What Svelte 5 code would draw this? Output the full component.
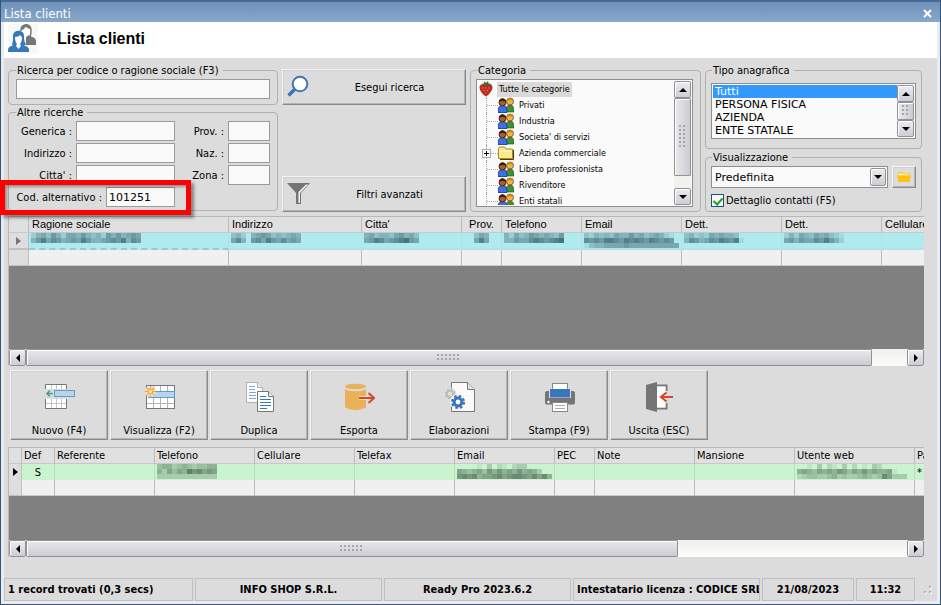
<script>
	let search = $state('');
	let generica = $state('');
	let indirizzo = $state('');
	let citta = $state('');
	let prov = $state('');
	let naz = $state('');
	let zona = $state('');
	let codAlternativo = $state('101251');
	let tipo = $state('Tutti');
	let vista = $state('Predefinita');
	let dettaglio = $state(true);

	const tipi = ['Tutti', 'PERSONA FISICA', 'AZIENDA', 'ENTE STATALE'];

	const categorie = [
		{ name: 'Privati' },
		{ name: 'Industria' },
		{ name: "Societa' di servizi" },
		{ name: 'Azienda commerciale', folder: true },
		{ name: 'Libero professionista' },
		{ name: 'Rivenditore' },
		{ name: 'Enti statali' }
	];

	// mask: censored value, one digit per block, 0 = clear, 9 = darkest
	const clienti = [
		{ title: 'Ragione sociale', width: 200, mask: ['24536425546434264645650', '46857645658644567684760'] },
		{ title: 'Indirizzo', width: 133, mask: ['342045653434540', '574067586575650'] },
		{ title: "Citta'", width: 100, mask: ['45344356453', '56875678965'] },
		{ title: 'Prov.', width: 40, mask: ['354', '585'], center: true },
		{ title: 'Telefono', width: 80, mask: ['425346545436', '446557876789'] },
		{ title: 'Email', width: 100, mask: ['3243435446453454210', '7676887687876876760', '1344555565555555555'] },
		{ title: 'Dett.', width: 100, mask: ['342325454430', '476457687681'] },
		{ title: 'Dett.', width: 100, mask: ['242543545321', '564655768642'] },
		{ title: 'Cellulare', width: 100, mask: [] }
	];

	const contatti = [
		{ title: 'Def', width: 33, text: 'S' },
		{ title: 'Referente', width: 100 },
		{ title: 'Telefono', width: 100, mask: ['455345434455', '536465978676', '333333333333'] },
		{ title: 'Cellulare', width: 100 },
		{ title: 'Telefax', width: 100 },
		{ title: 'Email', width: 100, mask: ['0000103021023300000', '6545647575657565300', '7878566786788768685'] },
		{ title: 'PEC', width: 40 },
		{ title: 'Note', width: 100 },
		{ title: 'Mansione', width: 100 },
		{ title: 'Utente web', width: 120, mask: ['0010302103020103200000', '5654656576465756556100', '2344334534334543486333'] },
		{ title: 'Password', width: 100, text: '*', left: true }
	];

	const stato = [
		{ text: '1 record trovati (0,3 secs)', width: 189, left: true },
		{ text: 'INFO SHOP S.R.L.', width: 187 },
		{ text: 'Ready Pro 2023.6.2', width: 187 },
		{ text: 'Intestatario licenza : CODICE SRL', width: 187, left: true },
		{ text: '21/08/2023', width: 92 },
		{ text: '11:32', width: 59 }
	];

	const azioni = [
		{ label: 'Nuovo (F4)', icon: nuovo },
		{ label: 'Visualizza (F2)', icon: visualizza },
		{ label: 'Duplica', icon: duplica },
		{ label: 'Esporta', icon: esporta },
		{ label: 'Elaborazioni', icon: elaborazioni },
		{ label: 'Stampa (F9)', icon: stampa },
		{ label: 'Uscita (ESC)', icon: uscita }
	];

	const total = (cols) => cols.reduce((sum, c) => sum + c.width, 0);
</script>

{#snippet nuovo()}
	<path d="M2.5 8V3.5h21V8M2.5 18v9.500h21V18" fill="#fff" stroke="#777" />
	<path d="M8.500 4v4M13.500 4v4M18.500 4v4M8.500 18v9M13.500 18v9M18.500 18v9M3 22.500h20" fill="none" stroke="#c4c4c4" />
	<rect x="11.500" y="9.500" width="20" height="6" fill="#bcd3ea" stroke="#5a9fd0" />
	<path d="M10 12.500H4M7 9.500l-3 3 3 3" fill="none" stroke="#3fa37c" stroke-width="1.500" />
{/snippet}

{#snippet visualizza()}
	<rect x="3.500" y="4.500" width="28" height="23" fill="#fff" stroke="#777" />
	<path d="M10.500 5v22M17.500 5v22M24.500 5v22M4 22.500h27" stroke="#b4b4b4" />
	<rect x="5.500" y="10.500" width="26" height="6" fill="#bcd3ea" stroke="#5a9fd0" />
	<circle cx="7.500" cy="10.500" r="5.500" fill="#e6e6e6" />
	<path d="M7.500 5v11M2 10.500h11M3.500 6.500l8 8M11.500 6.500l-8 8" stroke="#f0ab3c" stroke-width="1.300" />
	<circle cx="7.500" cy="10.500" r="2.200" fill="#fbe3b4" stroke="#f0ab3c" />
{/snippet}

{#snippet duplica()}
	<path d="M3.500 1.500h11l5 5v15h-16z" fill="#fafafa" stroke="#b0b0b0" />
	<path d="M14.500 1.500v5h5" fill="#eee" stroke="#b0b0b0" />
	<path d="M6 5.500h6M6 8.500h6M6 11.500h7M6 14.500h7M6 17.500h7" stroke="#79abe0" />
	<path d="M14.500 10.500h11l5 5v15h-16z" fill="#fff" stroke="#777" />
	<path d="M25.500 10.500v5h5" fill="#eee" stroke="#777" />
	<path d="M17 15.500h6M17 18.500h11M17 21.500h11M17 24.500h11M17 27.500h7" stroke="#3a77ba" />
{/snippet}

{#snippet esporta()}
	<ellipse cx="12.500" cy="5.500" rx="10.500" ry="2.700" fill="#e9b158" />
	<path d="M2 8c4 3 17 3 21 0v18c-4 4-17 4-21 0z" fill="#e9b158" />
	<path d="M16 17h14" stroke="#f5dfbd" stroke-width="4" />
	<path d="M16 17h15M25.500 12l5.500 5-5.500 5" fill="none" stroke="#d5492b" stroke-width="2" />
{/snippet}

{#snippet elaborazioni()}
	<path d="M8.500 1.500h16l7 7v22h-23z" fill="#fafafa" stroke="#777" />
	<path d="M24.500 1.500v7h7" fill="#e4e4e4" stroke="#777" />
	<circle cx="7" cy="13" r="6.500" fill="#dcdcdc" />
	<circle cx="7" cy="13" r="3.200" fill="none" stroke="#b8b8b8" stroke-width="1.600" />
	<circle cx="7" cy="13" r="4.500" fill="none" stroke="#b8b8b8" stroke-width="1.600" stroke-dasharray="1.700 1.830" />
	<circle cx="15" cy="21" r="8" fill="#fafafa" />
	<circle cx="15" cy="21" r="3.900" fill="none" stroke="#3a77b8" stroke-width="3" />
	<circle cx="15" cy="21" r="6" fill="none" stroke="#3a77b8" stroke-width="2.200" stroke-dasharray="2.600 2.110" />
{/snippet}

{#snippet stampa()}
	<rect x="9.500" y="2.500" width="15" height="9" fill="#fff" stroke="#888" />
	<path d="M4 10h26c1.500 0 2 1 2 2v9c0 2-1 2.500-2 2.500H4c-1 0-2-.5-2-2.500v-9c0-1 .5-2 2-2z" fill="#757575" />
	<rect x="6" y="8" width="22" height="9" fill="#dcdcdc" />
	<rect x="7" y="8" width="20" height="8.500" fill="#3a77b8" />
	<circle cx="5.500" cy="21" r="1.200" fill="#fff" />
	<rect x="9.500" y="21.500" width="15" height="9" fill="#fff" stroke="#888" />
	<path d="M12 24.500h10M12 27.500h10" stroke="#aaa" />
{/snippet}

{#snippet uscita()}
	<path d="M14 4.500h9.500V10M23.500 22v5.500H14" fill="none" stroke="#777" stroke-width="2" />
	<rect x="14" y="5.500" width="8.500" height="21" fill="#fff" />
	<path d="M3 4l11-3v30L3 28z" fill="#757575" />
	<path d="M30 16H18M23.500 11.500L18 16l5.500 4.500" fill="none" stroke="#d5492b" stroke-width="2.200" />
{/snippet}

{#snippet people()}
	<svg class="small-icon" width="16" height="16" viewBox="0 0 16 16" aria-hidden="true">
		<path d="M8 15c0-5 1-7 4-7s4 2 4 7z" fill="#2f9a3a" stroke="#12501a" stroke-width=".6" />
		<circle cx="12" cy="4.500" r="3.500" fill="#f2b24a" stroke="#7a4a10" stroke-width=".8" />
		<path d="M8.500 4c0-4 7-4 7 0-2-1-5-1-7 0z" fill="#c98a1c" />
		<path d="M0 15.500C0 10 1.500 8.500 4.500 8.500S9 10 9 15.500z" fill="#3f6fe0" stroke="#152f80" stroke-width=".8" />
		<circle cx="4.500" cy="5.500" r="3.500" fill="#a9622a" stroke="#2a1408" stroke-width=".8" />
		<path d="M1 5c0-5 7-5 7 0-2-1.500-5-1.500-7 0z" fill="#38200f" />
		<path d="M11 9l1 3 1-3z" fill="#e33" />
	</svg>
{/snippet}

{#snippet mosaic(rows)}
	<svg class="mosaic" width={rows[0].length * 5} height={rows.length * 5} shape-rendering="crispEdges" aria-hidden="true">
		{#each rows as row, y}
			{#each row as d, x}
				<rect x={x * 5} y={y * 5} width="5" height="5" fill="currentColor" fill-opacity={d / 10} />
			{/each}
		{/each}
	</svg>
{/snippet}

{#snippet scrollbar(dir, size)}
	<div class="scroll {dir}">
		<button class="arrow back" aria-label="Indietro" tabindex="-1"></button>
		<div class="track">
			<div class="thumb" style:flex-basis="{size}%"><i></i></div>
		</div>
		<button class="arrow next" aria-label="Avanti" tabindex="-1"></button>
	</div>
{/snippet}

{#snippet grid(cols, first)}
	<div class="table-clip">
		<table style:width="{total(cols) + first}px">
			<colgroup>
				<col style:width="{first}px" />
				{#each cols as col}<col style:width="{col.width}px" />{/each}
			</colgroup>
			<thead>
				<tr>
					<th></th>
					{#each cols as col}<th class:center={col.center}>{col.title}</th>{/each}
				</tr>
			</thead>
			<tbody>
				<tr class="current">
					<td class="marker"><span></span></td>
					{#each cols as col}
						<td class:center={col.center || (col.text && !col.left)} class:masked={col.mask}>
							{#if col.mask?.length}{@render mosaic(col.mask)}{:else}{col.text ?? ''}{/if}
						</td>
					{/each}
				</tr>
				<tr>
					<td class="marker"></td>
					{#each cols as _}<td></td>{/each}
				</tr>
			</tbody>
		</table>
	</div>
{/snippet}

<div class="window">
	<div class="titlebar">
		<span>Lista clienti</span>
		<button class="close" aria-label="Chiudi">
			<svg width="9" height="9" viewBox="0 0 9 9"><path d="M1 1l7 7M8 1L1 8" stroke="#fff" stroke-width="2" /></svg>
		</button>
	</div>

	<header>
		<svg width="30" height="30" viewBox="0 0 30 30" aria-hidden="true">
			<rect width="30" height="30" fill="#f8f8f8" />
			<path d="M13 7c-1-8 10-8 10-1 0 4-1 8-3 8" fill="#fff" stroke="#777" stroke-width="1.500" />
			<path d="M13 6c0-7 10-7 10-1-3 0-4-2-6-2 0 2-2 3-4 3z" fill="#777" />
			<path d="M18 13l3-2c1 2 7 2 7 6v4H18z" fill="#757575" />
			<path d="M4 21c1-4 1-6 1-9C5 5 16 5 16 12c0 3 0 5 2 9z" fill="#3a77b8" />
			<path d="M0 28v-2c0-4 5-4 7-6h7c2 2 7 2 7 6v2z" fill="#3a77b8" />
			<path d="M7 13c3 0 4-1 5-2 1 1 2 2 2 3 0 3-1 5-2 6l1 2-2.500 3L8 22l1-2c-1-1-2-3-2-7z" fill="#fff" />
		</svg>
		<h1>Lista clienti</h1>
	</header>

	<main>
		<div class="filters">
			<div class="col-search">
				<fieldset class="codice">
					<legend><label for="search">Ricerca per codice o ragione sociale (F3)</label></legend>
					<input id="search" class="wide" type="text" bind:value={search} />
				</fieldset>
				<fieldset>
					<legend>Altre ricerche</legend>
					<div class="fields">
						<label for="generica">Generica :</label>
						<input id="generica" type="text" bind:value={generica} />
						<label for="prov">Prov. :</label>
						<input id="prov" type="text" bind:value={prov} />
						<label for="indirizzo">Indirizzo :</label>
						<input id="indirizzo" type="text" bind:value={indirizzo} />
						<label for="naz">Naz. :</label>
						<input id="naz" type="text" bind:value={naz} />
						<label for="citta">Citta' :</label>
						<input id="citta" type="text" bind:value={citta} />
						<label for="zona">Zona :</label>
						<input id="zona" type="text" bind:value={zona} />
						<div class="cod">
							<label for="cod">Cod. alternativo :</label>
							<input id="cod" type="text" bind:value={codAlternativo} />
							<div class="highlight"></div>
						</div>
					</div>
				</fieldset>
			</div>

			<div class="col-buttons">
				<button class="raised side">
					<svg width="23" height="23" viewBox="0 0 23 23" aria-hidden="true">
						<path d="M7.500 14.500L1.500 20.500" stroke="#3a77b8" stroke-width="3.500" />
						<circle cx="13" cy="9" r="7.300" fill="#fff" stroke="#3a77b8" stroke-width="2" />
					</svg>
					<span>Esegui ricerca</span>
				</button>
				<button class="raised side">
					<svg width="23" height="23" viewBox="0 0 23 23" aria-hidden="true">
						<path d="M0 1h23l-9 10v11H9V11z" fill="#757575" />
						<path d="M19 2.500h2l-8 8.500v10h-1.500V10z" fill="#f4f4f4" />
					</svg>
					<span>Filtri avanzati</span>
				</button>
			</div>

			<fieldset class="col-cat">
				<legend>Categoria</legend>
				<div class="sunken tree-box">
					<ul class="tree">
						<li class="root">
							<svg width="16" height="16" viewBox="0 0 16 16" aria-hidden="true">
								<path d="M8 15.500C4 13 1.500 9 1.500 6c0-3 4-3 6.500-2 2.500-1 6.500-1 6.500 2 0 3-2.500 7-6.500 9.500z" fill="#c22a20" />
								<path d="M3 3l3-.5L6.500 0 8 2l2-2 .5 2.500L14 3l-4 2-2-1-2 1z" fill="#3c6b25" />
								<path d="M4 7h1M7 7h1M10.500 7h1M5.500 9.500h1M9 9.500h1M7 12h1" stroke="#f0a080" />
							</svg>
							<span>Tutte le categorie</span>
						</li>
						{#each categorie as cat}
							<li>
								<span class="branch">{#if cat.folder}<button class="plus" aria-label="Espandi"></button>{/if}</span>
								{#if cat.folder}
									<svg class="small-icon" width="16" height="16" viewBox="0 0 16 16" aria-hidden="true">
										<path d="M.5 13.500v-10l1-1.500h5l1.500 2h6.500v9.500z" fill="#fbe98a" stroke="#a98a20" />
										<path d="M1.500 6h12" stroke="#fffbd8" />
										<path d="M15.500 5v9.500H2" fill="none" stroke="#4a3c10" />
									</svg>
								{:else}
									{@render people()}
								{/if}
								<span>{cat.name}</span>
							</li>
						{/each}
					</ul>
					{@render scrollbar('v', 87)}
				</div>
			</fieldset>

			<div class="col-tipo">
				<fieldset class="tipo">
					<legend><label for="tipo">Tipo anagrafica</label></legend>
					<div class="sunken list-box">
						<select id="tipo" size="4" bind:value={tipo}>
							{#each tipi as t}<option>{t}</option>{/each}
						</select>
						{@render scrollbar('v', 100)}
					</div>
				</fieldset>
				<fieldset>
					<legend><label for="vista">Visualizzazione</label></legend>
					<div class="view-row">
						<div class="combo sunken">
							<select id="vista" bind:value={vista}>
								<option>Predefinita</option>
							</select>
							<span class="arrow next"></span>
						</div>
						<button class="raised folder" aria-label="Apri visualizzazione">
							<svg width="14" height="12" viewBox="0 0 14 12"><path d="M1 1h5l1 1.500h6V6H1z" fill="#f5c842" /><path d="M2 2.500h4l1 1h5v1H2z" fill="#fff3c4" /><path d="M0 4.500h14L12.500 11h-11z" fill="#ffc20e" /></svg>
						</button>
					</div>
					<label class="check"><input type="checkbox" bind:checked={dettaglio} />Dettaglio contatti (F5)</label>
				</fieldset>
			</div>
		</div>

		<section class="grid clienti">
			{@render grid(clienti, 20)}
			<div class="void"></div>
			{@render scrollbar('h', 96)}
		</section>

		<div class="toolbar">
			{#each azioni as a}
				<button class="raised">
					<svg width="32" height="32" viewBox="0 0 32 32" aria-hidden="true">{@render a.icon()}</svg>
					<span>{a.label}</span>
				</button>
			{/each}
		</div>

		<section class="grid contatti">
			{@render grid(contatti, 13)}
			<div class="void"></div>
			{@render scrollbar('h', 74)}
		</section>
	</main>

	<footer>
		{#each stato as s}
			<div class="panel" class:left={s.left} style:flex-basis="{s.width}px">{s.text}</div>
		{/each}
		<svg width="10" height="10" viewBox="0 0 10 10" aria-hidden="true">
			<path d="M6 1h2v2H6zM6 6h2v2H6zM1 6h2v2H1z" fill="#aaa" />
			<path d="M8 2v2H7M8 7v2H7M3 7v2H2" stroke="#fff" fill="none" />
		</svg>
	</footer>
</div>

<style>
	:global(body) {
		margin: 0;
		background: #dcdcdc;
	}

	.window {
		box-sizing: border-box;
		min-height: 100vh;
		display: flex;
		flex-direction: column;
		border: 1px solid #34557f;
		border-top: 0;
		box-shadow: inset 3px 0 #ebebeb, inset -3px 0 #ebebeb, inset 0 -3px #ebebeb;
		background: #dcdcdc;
		color: #000;
		font-family: 'DejaVu Sans Condensed', 'DejaVu Sans', sans-serif;
		font-size: 11px;
		line-height: 13px;
	}

	.window * {
		box-sizing: border-box;
	}

	button,
	input,
	select {
		margin: 0;
		font: inherit;
		color: inherit;
		border-radius: 0;
	}

	.titlebar {
		display: flex;
		align-items: center;
		justify-content: space-between;
		height: 22px;
		padding: 3px 8px 0 3px;
		border-top: 2px solid #4a6a94;
		background: linear-gradient(#6f91ba, #88a8ca);
		color: #fff;
		font-size: 13px;
	}

	.close {
		display: flex;
		padding: 0;
		border: 0;
		background: none;
	}

	header {
		display: flex;
		align-items: center;
		gap: 19px;
		height: 36px;
		margin: 0 3px;
		padding: 0 4px 2px;
		background: #fff;
	}

	h1 {
		margin: 0;
		font: bold 16px/20px 'Liberation Sans', Arial, sans-serif;
	}

	main {
		flex: 1;
		display: flex;
		flex-direction: column;
		padding: 6px 16px 21px 7px;
	}

	.filters {
		display: grid;
		grid-template-columns: 270fr 184fr 231fr 217fr;
		column-gap: 4px;
		height: 148px;
		padding-right: 2px;
	}

	fieldset {
		min-width: 0;
		margin: 0;
		padding: 2px 7px 3px;
		border: 1px solid #b0b0b0;
		border-radius: 4px;
	}

	legend {
		height: 13px;
		padding: 0 4px 0 1px;
	}

	.col-search {
		display: flex;
		flex-direction: column;
		gap: 1px;
	}

	.codice {
		padding-bottom: 5px;
	}

	input[type='text'] {
		width: 100%;
		min-width: 0;
		height: 20px;
		padding: 0 2px;
		border: 1px solid #9a9a9a;
		background: #fafafa;
		font-family: 'DejaVu Sans', Verdana, sans-serif;
		font-size: 11px;
	}

	.wide {
		display: block;
	}

	.fields {
		display: grid;
		grid-template-columns: 56px 99px 45px 1fr;
		gap: 2px 4px;
		align-items: center;
	}

	.fields label {
		text-align: right;
		white-space: nowrap;
	}

	.cod {
		grid-column: 1 / 3;
		position: relative;
		display: grid;
		grid-template-columns: 86px 69px;
		gap: 4px;
		align-items: center;
	}

	.highlight {
		position: absolute;
		inset: -7px -16px -8px -16px;
		border: 5px solid #f00;
		box-shadow: 3px 3px 3px rgba(0, 0, 0, 0.4), inset 2px 2px 3px rgba(0, 0, 0, 0.35);
		pointer-events: none;
	}

	.col-buttons {
		display: flex;
		flex-direction: column;
		justify-content: space-between;
		padding-top: 5px;
	}

	.raised {
		border: 1px solid;
		border-color: #f4f4f4 #8a8a8a #8a8a8a #f4f4f4;
		box-shadow: inset -1px -1px #b4b4b4, inset 1px 1px #cfcfd4;
		background: #dcdcdc;
		padding: 0;
	}

	.side {
		display: flex;
		align-items: flex-start;
		height: 36px;
		padding: 5px 4px;
	}

	.side span {
		flex: 1;
		padding: 6px 0 0 8px;
	}

	.sunken {
		border: 1px solid #8e8e8e;
		background: #fafafa;
	}

	.col-cat {
		padding: 2px 7px 4px 5px;
	}

	.col-cat legend,
	.col-tipo legend {
		margin-left: 1px;
	}

	.tree-box {
		display: flex;
		height: 128px;
		padding: 1px;
	}

	.tree {
		flex: 1;
		margin: 0;
		padding: 0;
		overflow: hidden;
		list-style: none;
		font-size: 9px;
	}

	.tree li {
		display: flex;
		align-items: center;
		height: 16px;
		white-space: nowrap;
	}

	.tree .root {
		gap: 3px;
	}

	.root span {
		padding: 1px 2px;
		background: #dadada;
	}

	.branch {
		display: flex;
		align-items: center;
		align-self: stretch;
		width: 12px;
		margin-left: 8px;
		border-left: 1px dotted #a8a8a8;
		background: repeating-linear-gradient(90deg, #a8a8a8 0 1px, transparent 1px 2px) 0 8px / 100% 1px no-repeat;
	}

	.plus {
		width: 9px;
		height: 9px;
		margin-left: -5px;
		padding: 0;
		border: 1px solid #aaa;
		background:
			linear-gradient(#000, #000) center / 5px 1px no-repeat,
			linear-gradient(#000, #000) center / 1px 5px no-repeat,
			#fff;
	}

	.small-icon {
		margin-right: 5px;
	}

	.col-tipo {
		display: flex;
		flex-direction: column;
		gap: 2px;
	}

	.col-tipo fieldset {
		padding: 2px 5px 4px;
	}

	.col-tipo .tipo {
		padding: 6px 5px 9px;
	}

	.list-box {
		display: flex;
		height: 56px;
		padding: 1px;
	}

	.list-box select {
		flex: 1;
		min-width: 0;
		padding: 0;
		border: 0;
		outline: 0;
		overflow: hidden;
		background: transparent;
		font-family: 'DejaVu Sans', Verdana, sans-serif;
		font-size: 11px;
	}

	.list-box option {
		min-height: 0;
		height: 13px;
		padding: 0 2px;
		line-height: 13px;
	}

	.list-box option:checked {
		background: linear-gradient(#3399ff, #3399ff);
		-webkit-text-fill-color: #fff;
	}

	.view-row {
		display: flex;
		gap: 4px;
		height: 22px;
	}

	.combo {
		position: relative;
		flex: 1;
	}

	.combo select {
		appearance: none;
		width: 100%;
		height: 20px;
		padding: 0 3px;
		border: 0;
		background: transparent;
		font-family: 'DejaVu Sans', Verdana, sans-serif;
		font-size: 11px;
	}

	.combo .arrow {
		position: absolute;
		top: 1px;
		right: 1px;
		width: 16px;
		height: 18px;
		pointer-events: none;
	}

	.folder {
		display: flex;
		align-items: center;
		justify-content: center;
		width: 24px;
	}

	.check {
		display: flex;
		align-items: center;
		gap: 2px;
		margin-top: 6px;
	}

	.check input {
		appearance: none;
		position: relative;
		width: 13px;
		height: 13px;
		border: 1px solid #1d4f80;
		background: #f6f6f4;
	}

	.check input:checked::after {
		content: '';
		position: absolute;
		left: 3px;
		top: 1px;
		width: 4px;
		height: 7px;
		border: solid #21a121;
		border-width: 0 2px 2px 0;
		transform: rotate(42deg);
	}

	.scroll {
		display: flex;
		flex-shrink: 0;
		background: #f1f1ee;
	}

	.scroll.v {
		flex-direction: column;
		width: 17px;
	}

	.scroll.h {
		height: 17px;
		background: linear-gradient(#efefec, #fdfdf9);
	}

	.arrow {
		display: flex;
		flex: 0 0 17px;
		align-items: center;
		justify-content: center;
		padding: 0;
		border: 1px solid #8f9098;
		border-radius: 2px;
		background: linear-gradient(#ececef, #cdced4);
		box-shadow: inset 1px 1px #fff;
	}

	.arrow::after {
		content: '';
		border: 4px solid transparent;
	}

	.v .back::after {
		border-top: 0;
		border-bottom-color: #000;
	}

	.v .next::after,
	.combo .next::after {
		border-bottom: 0;
		border-top-color: #000;
	}

	.h .back::after {
		border-left: 0;
		border-right-color: #000;
	}

	.h .next::after {
		border-right: 0;
		border-left-color: #000;
	}

	.track {
		flex: 1;
		display: flex;
		min-width: 0;
		min-height: 0;
	}

	.v .track {
		flex-direction: column;
	}

	.thumb {
		display: flex;
		align-items: center;
		justify-content: center;
		min-height: 0;
		border: 1px solid #8f9098;
		border-radius: 1px;
		box-shadow: inset 1px 1px #fff;
		background: linear-gradient(#e9e9ec, #cbccd3);
	}

	.v .thumb {
		background: linear-gradient(90deg, #e9e9ec, #cbccd3);
	}

	.thumb i {
		width: 24px;
		height: 8px;
		background: radial-gradient(circle at 1px 1px, #a4a5ac 1px, transparent 1px) 0 0 / 4px 4px;
	}

	.v .thumb i {
		width: 8px;
		height: 24px;
	}

	.list-box .thumb i {
		height: 12px;
	}

	.grid {
		display: flex;
		flex-direction: column;
		border: 1px solid #b8b8bc;
		border-width: 1px 0 0 1px;
		background: #808080;
	}

	.clienti {
		flex: 1 0 auto;
		margin-top: 4px;
		font-family: 'Liberation Sans', Arial, sans-serif;
	}

	.void {
		flex: 1 0 44px;
	}

	.table-clip {
		overflow: hidden;
	}

	table {
		table-layout: fixed;
		border-collapse: separate;
		border-spacing: 0;
	}

	th,
	td {
		height: 16px;
		padding: 0 2px;
		border-right: 1px solid #bcbcbc;
		border-bottom: 1px solid #c8c8c8;
		background: #f0f0f0;
		font-weight: normal;
		line-height: 13px;
		text-align: left;
		white-space: nowrap;
		overflow: hidden;
		vertical-align: middle;
	}

	th {
		background: #e0e0e0;
	}

	.clienti th {
		padding: 0 3px;
	}

	.center {
		text-align: center;
	}

	.current td {
		border-bottom: 0;
		color: #3f6570;
		background: #aeeaee;
		border-color: #b8dfe2;
	}

	.current .masked {
		vertical-align: top;
	}

	.clienti .current td {
		height: 17px;
		border-bottom: 2px solid #b4e2e6;
	}

	.clienti .current td:nth-child(2) {
		border-bottom-style: dashed;
		border-bottom-color: #a3c4c8;
	}

	.contatti .current td {
		color: #000;
		background: #c9f4cf;
		border-color: #bfdcc3;
	}

	.contatti .mosaic {
		color: #54705c;
	}

	.mosaic {
		display: block;
	}

	.center .mosaic {
		margin: 0 auto;
	}

	td.marker,
	.current td.marker,
	.contatti .current td.marker {
		padding: 0;
		background: #dedede;
		border-color: #c0c0c0;
	}

	.current .marker span {
		display: block;
		width: 0;
		margin: 0 auto;
		border: 4px solid transparent;
		border-left: 5px solid #000;
		border-right: 0;
	}

	.clienti .marker span {
		border-left-color: #777;
	}

	.toolbar {
		display: flex;
		gap: 2px;
		padding: 4px 2px 7px;
	}

	.toolbar button {
		display: flex;
		flex-direction: column;
		align-items: center;
		justify-content: space-between;
		width: 98px;
		height: 70px;
		padding: 10px 0 2px;
	}

	footer {
		display: flex;
		align-items: center;
		gap: 2px;
		margin: 0 3px 3px;
		padding-right: 4px;
		font-weight: bold;
	}

	.panel {
		flex: 0 1 auto;
		min-width: 0;
		height: 23px;
		border: 1px solid #c0c0c4;
		line-height: 22px;
		text-align: center;
		white-space: nowrap;
		overflow: hidden;
	}

	.panel.left {
		padding-left: 3px;
		text-align: left;
	}

	footer svg {
		flex-shrink: 0;
		margin-left: auto;
	}
</style>
